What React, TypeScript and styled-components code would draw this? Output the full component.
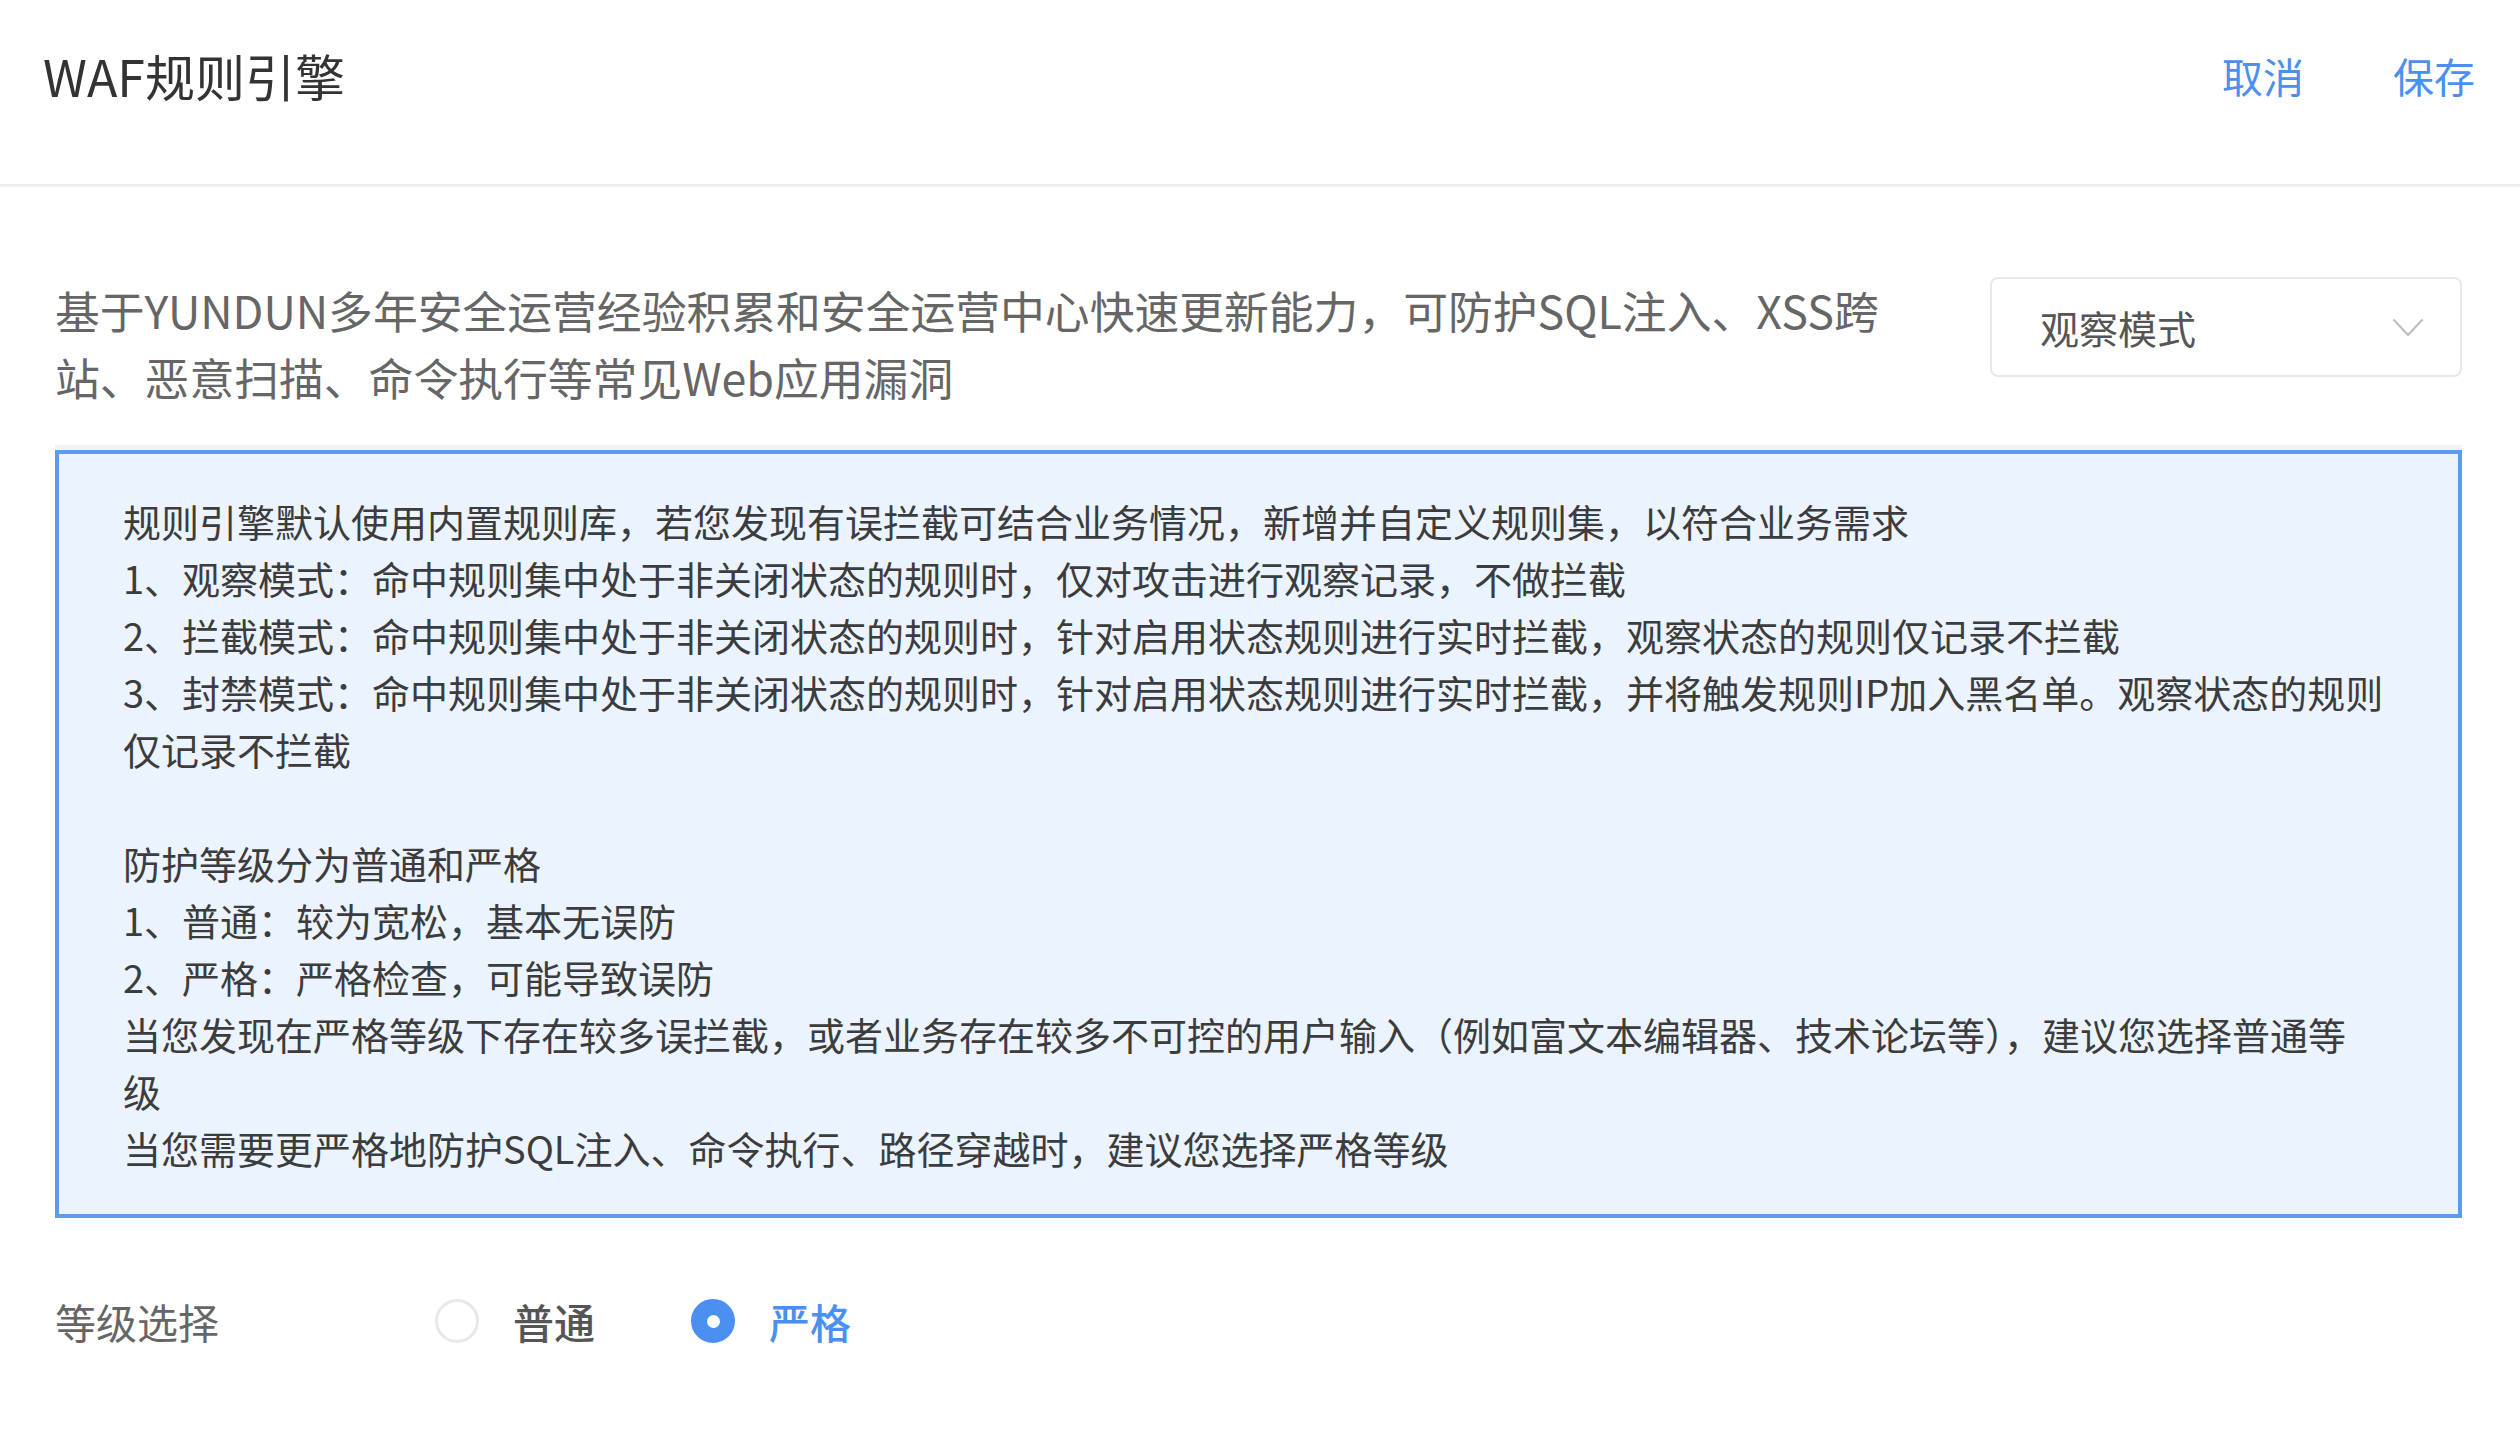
import React from "react";
import styled, { createGlobalStyle } from "styled-components";

const GlobalStyle = createGlobalStyle`
  html, body {
    margin: 0;
    padding: 0;
    background: #ffffff;
  }
  body {
    font-family: "Noto Sans CJK SC", "Noto Sans", "Liberation Sans", sans-serif;
  }
  * { box-sizing: border-box; }
`;

const BLUE = "#4b8ff0";

const Page = styled.div`
  width: 2520px;
  min-height: 1440px;
  background: #fff;
`;

const Header = styled.header`
  height: 187px;
  padding: 0 45px 34px 43px;
  display: flex;
  align-items: center;
  justify-content: space-between;
  border-bottom: 3px solid #efefef;
`;

const Title = styled.h1`
  margin: 0;
  font-size: 50px;
  font-weight: 400;
  line-height: 66px;
  color: #333333;
`;

const Actions = styled.div`
  display: flex;
  align-items: center;
  gap: 89px;
`;

const ActionButton = styled.button`
  border: none;
  background: none;
  padding: 0;
  font-family: inherit;
  font-size: 41px;
  line-height: 60px;
  color: ${BLUE};
  cursor: pointer;
`;

const Content = styled.main`
  padding: 89px 58px 0 55px;
`;

const IntroRow = styled.div`
  display: flex;
  align-items: flex-start;
  justify-content: space-between;
`;

const Description = styled.p`
  margin: 0;
  font-size: 44.8px;
  line-height: 67px;
  color: #666666;
  white-space: nowrap;
`;

const SelectBox = styled.div`
  margin-top: 1px;
  width: 472px;
  height: 100px;
  border: 2px solid #e8e8e8;
  border-radius: 8px;
  padding: 0 36px 0 48px;
  display: flex;
  align-items: center;
  justify-content: space-between;
  font-size: 39px;
  color: #555555;
  background: #fff;
`;

const Chevron = styled.svg`
  width: 32px;
  height: 19px;
  flex: none;
`;

const InfoBox = styled.section`
  margin-top: 40px;
  border: 4px solid #5b9cf0;
  background: #eaf3fe;
  padding: 38px 64px;
  box-shadow: 0 -5px 0 #f3f3f3;
`;

const InfoLine = styled.p`
  margin: 0;
  min-height: 57px;
  font-size: 38px;
  line-height: 57px;
  color: #3c3c3c;
  white-space: nowrap;
`;

const LevelRow = styled.div`
  margin-top: 73px;
  height: 60px;
  display: flex;
  align-items: center;
`;

const LevelLabel = styled.span`
  width: 380px;
  flex: none;
  font-size: 41px;
  line-height: 60px;
  color: #666666;
`;

const RadioGroup = styled.div`
  display: flex;
  align-items: center;
  gap: 96px;
`;

const RadioOption = styled.label`
  display: flex;
  align-items: center;
  gap: 34px;
  cursor: pointer;
`;

const RadioCircle = styled.span<{ $checked: boolean }>`
  width: 44px;
  height: 44px;
  border-radius: 50%;
  flex: none;
  display: flex;
  align-items: center;
  justify-content: center;
  background: ${(p) => (p.$checked ? BLUE : "#ffffff")};
  border: ${(p) => (p.$checked ? `3px solid ${BLUE}` : "3px solid #e8e8e8")};
  &::after {
    content: "";
    display: ${(p) => (p.$checked ? "block" : "none")};
    width: 13px;
    height: 13px;
    border-radius: 50%;
    background: #ffffff;
  }
`;

const RadioText = styled.span<{ $checked: boolean }>`
  font-size: 41px;
  line-height: 60px;
  font-weight: 500;
  color: ${(p) => (p.$checked ? BLUE : "#555555")};
`;

const infoLines = [
  "规则引擎默认使用内置规则库，若您发现有误拦截可结合业务情况，新增并自定义规则集，以符合业务需求",
  "1、观察模式：命中规则集中处于非关闭状态的规则时，仅对攻击进行观察记录，不做拦截",
  "2、拦截模式：命中规则集中处于非关闭状态的规则时，针对启用状态规则进行实时拦截，观察状态的规则仅记录不拦截",
  "3、封禁模式：命中规则集中处于非关闭状态的规则时，针对启用状态规则进行实时拦截，并将触发规则IP加入黑名单。观察状态的规则",
  "仅记录不拦截",
  "",
  "防护等级分为普通和严格",
  "1、普通：较为宽松，基本无误防",
  "2、严格：严格检查，可能导致误防",
  "当您发现在严格等级下存在较多误拦截，或者业务存在较多不可控的用户输入（例如富文本编辑器、技术论坛等），建议您选择普通等",
  "级",
  "当您需要更严格地防护SQL注入、命令执行、路径穿越时，建议您选择严格等级",
];

const levels = [
  { key: "normal", label: "普通" },
  { key: "strict", label: "严格" },
];

export default function App() {
  const [level, setLevel] = React.useState("strict");
  return (
    <Page>
      <GlobalStyle />
      <Header>
        <Title>WAF规则引擎</Title>
        <Actions>
          <ActionButton>取消</ActionButton>
          <ActionButton>保存</ActionButton>
        </Actions>
      </Header>
      <Content>
        <IntroRow>
          <Description>
            基于YUNDUN多年安全运营经验积累和安全运营中心快速更新能力，可防护SQL注入、XSS跨
            <br />
            站、恶意扫描、命令执行等常见Web应用漏洞
          </Description>
          <SelectBox>
            <span>观察模式</span>
            <Chevron viewBox="0 0 32 19">
              <polyline
                points="1.5,1.5 16,17 30.5,1.5"
                fill="none"
                stroke="#bdbdbd"
                strokeWidth="2"
              />
            </Chevron>
          </SelectBox>
        </IntroRow>
        <InfoBox>
          {infoLines.map((line, i) => (
            <InfoLine key={i}>{line}</InfoLine>
          ))}
        </InfoBox>
        <LevelRow>
          <LevelLabel>等级选择</LevelLabel>
          <RadioGroup>
            {levels.map((l) => (
              <RadioOption key={l.key} onClick={() => setLevel(l.key)}>
                <RadioCircle $checked={level === l.key} />
                <RadioText $checked={level === l.key}>{l.label}</RadioText>
              </RadioOption>
            ))}
          </RadioGroup>
        </LevelRow>
      </Content>
    </Page>
  );
}
